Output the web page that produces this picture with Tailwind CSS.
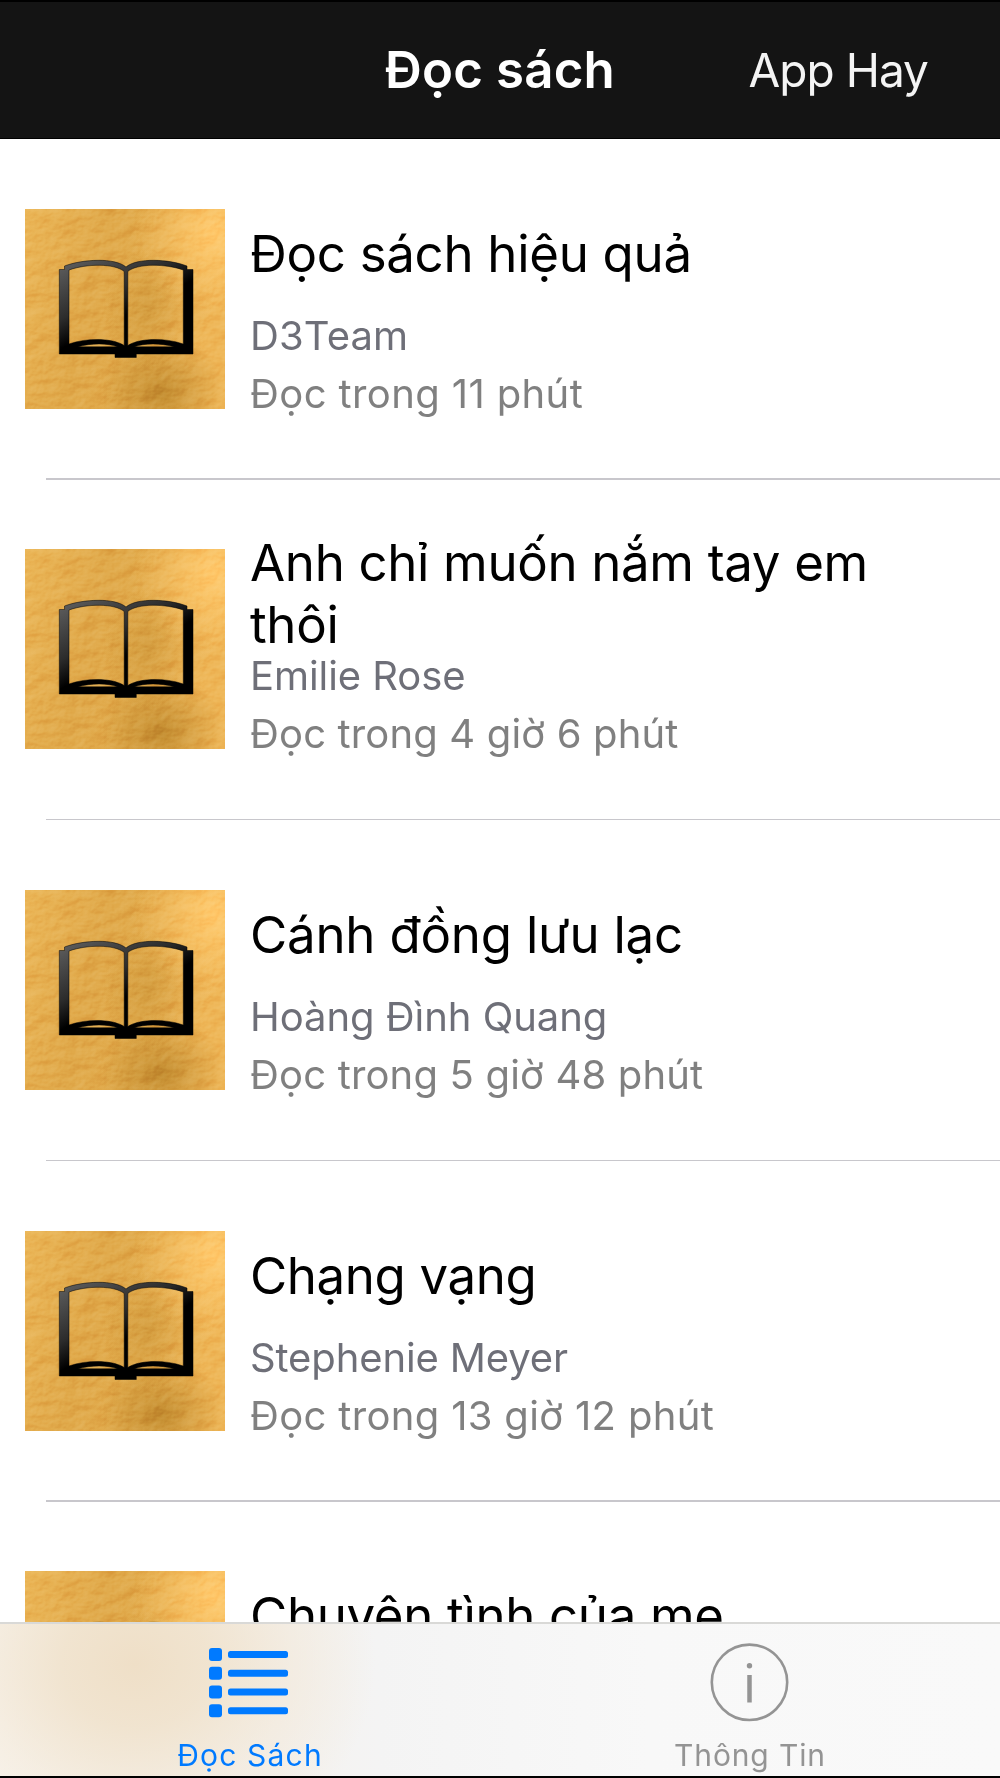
<!DOCTYPE html>
<html lang="vi">
<head>
<meta charset="utf-8">
<title>Đọc sách</title>
<script src="https://cdn.jsdelivr.net/npm/@tailwindcss/browser@4"></script>
</head>
<body class="bg-white">
<svg class="absolute h-0 w-0" aria-hidden="true">
  <defs>
    <linearGradient id="gold" x1="0" y1="0" x2="1" y2="0.25">
      <stop offset="0" stop-color="#ebb657"/>
      <stop offset="0.4" stop-color="#e0a94a"/>
      <stop offset="0.7" stop-color="#e1aa4b"/>
      <stop offset="1" stop-color="#eeb657"/>
    </linearGradient>
    <radialGradient id="shine" cx="0.95" cy="0.12" r="0.42">
      <stop offset="0" stop-color="#ffc96c"/>
      <stop offset="1" stop-color="#ffc96c" stop-opacity="0"/>
    </radialGradient>
    <radialGradient id="shade" cx="0.5" cy="0.5" r="0.5">
      <stop offset="0" stop-color="#b98327" stop-opacity="0.75"/>
      <stop offset="1" stop-color="#b98327" stop-opacity="0"/>
    </radialGradient>
    <linearGradient id="ink" gradientUnits="userSpaceOnUse" x1="40" y1="50" x2="88" y2="142">
      <stop offset="0" stop-color="#606060"/>
      <stop offset="0.5" stop-color="#2c2c2c"/>
      <stop offset="0.75" stop-color="#000"/>
    </linearGradient>
    <filter id="leather" x="0" y="0" width="1" height="1" color-interpolation-filters="sRGB">
      <feTurbulence type="fractalNoise" baseFrequency="0.045 0.055" numOctaves="4" seed="8"/>
      <feColorMatrix values="0 0 0 0 0  0 0 0 0 0  0 0 0 0 0  1 0 0 0 0"/>
      <feDiffuseLighting surfaceScale="4" lighting-color="#fff">
        <feDistantLight azimuth="235" elevation="31"/>
      </feDiffuseLighting>
    </filter>
    <symbol id="cover" viewBox="0 0 200 200">
      <rect width="200" height="200" fill="url(#gold)"/>
      <rect width="200" height="200" fill="url(#shine)"/>
      <ellipse cx="138" cy="185" rx="62" ry="58" fill="url(#shade)" transform="rotate(-20 138 185)"/>
      <ellipse cx="122" cy="100" rx="44" ry="60" fill="url(#shade)" opacity="0.4"/>
      <rect width="200" height="200" filter="url(#leather)" class="mix-blend-soft-light" opacity="0.28"/>
      <path fill="url(#ink)" fill-rule="evenodd" stroke="#000" stroke-opacity="0.55" stroke-width="0.9" d="M34.300 60.500H39.500V57C58 50 90 48.500 101 58C112 48.500 144 50 162 57V60.500H168V145H111.300V148.500H90V145H34.300Z
        M44 61V135C62 128.500 88 129 99.200 136.500V62.500C90 54.500 62 54.500 44 61Z
        M102.800 62.500V136.500C114 129 140 128.500 158.300 135V61C140 54.500 112 54.500 102.800 62.500Z
        M53 137.800C66 134 83 134 92.500 137.800Z M109.500 137.800C119 134 136 134 149 137.800Z"/>
    </symbol>
  </defs>
</svg>

<div class="flex h-[1778px] w-[1000px] flex-col overflow-hidden bg-white font-[Inter,sans-serif]">
  <header class="grid h-[139px] shrink-0 grid-cols-[1fr_auto_1fr] items-baseline border-t-2 border-b border-black bg-[#141414] pt-[37px] text-white">
    <span></span>
    <h1 class="text-[51px] leading-[62px] font-semibold tracking-[0.15px]">Đọc sách</h1>
    <a class="relative -top-px justify-self-end pr-[72px] text-[46px] leading-[56px] tracking-[-0.97px] text-[#f4f4f4]">App Hay</a>
  </header>

  <main id="list" class="min-h-0 flex-1 overflow-hidden"></main>

  <nav class="grid h-[154px] shrink-0 grid-cols-2 border-t-2 border-[#d9d9d7] bg-[radial-gradient(ellipse_240px_210px_at_135px_40px,rgba(239,223,199,1)_0%,rgba(240,226,204,0.9)_30%,rgba(242,230,212,0.5)_65%,rgba(245,238,228,0)_100%),linear-gradient(90deg,#f9f6f1_0%,#f4f2ef_28%,#f4f4f4_38%,#f8f8f8_65%,#f9f9f9_100%)]">
    <a class="flex flex-col items-center text-[#007aff]">
      <svg class="mt-[18px] mr-[2px] h-[80px] w-[80px]" viewBox="0 0 80 80" fill="currentColor">
        <rect x="0" y="6" width="13" height="13" rx="3"/><rect x="19" y="9" width="60" height="7" rx="2.500"/>
        <rect x="0" y="24.700" width="13" height="13" rx="3"/><rect x="19" y="27.700" width="60" height="7" rx="2.500"/>
        <rect x="0" y="43.500" width="13" height="13" rx="3"/><rect x="19" y="46.500" width="60" height="7" rx="2.500"/>
        <rect x="0" y="62.200" width="13" height="13" rx="3"/><rect x="19" y="65.200" width="60" height="7" rx="2.500"/>
      </svg>
      <span class="mt-[15px] text-[30px] leading-9 tracking-[1.18px]">Đọc Sách</span>
    </a>
    <a class="flex flex-col items-center text-[#949494]">
      <svg class="mt-[18px] h-[80px] w-[80px]" viewBox="0 0 80 80" fill="none" stroke="currentColor">
        <circle cx="39.500" cy="40.300" r="37.700" stroke-width="2.600"/>
        <circle cx="39.500" cy="23.700" r="2.700" fill="currentColor" stroke="none"/>
        <path d="M39.500 33V60.500" stroke-width="4.500"/>
      </svg>
      <span class="mt-[15px] text-[30px] leading-9 tracking-[0.88px]">Thông Tin</span>
    </a>
  </nav>
  <div class="h-0.5 shrink-0 bg-black"></div>
</div>

<script>
const books = [
  ["Đọc sách hiệu quả", "D3Team", "Đọc trong 11 phút", -0.3, 0.12, 0.39],
  ["Anh chỉ muốn nắm tay em thôi", "Emilie Rose", "Đọc trong 4 giờ 6 phút", -0.34, -0.07, 0.15],
  ["Cánh đồng lưu lạc", "Hoàng Đình Quang", "Đọc trong 5 giờ 48 phút", -0.22, -0.04, 0.17],
  ["Chạng vạng", "Stephenie Meyer", "Đọc trong 13 giờ 12 phút", -0.4, -0.12, 0.33],
  ["Chuyện tình của mẹ", "", "", -0.34, 0, 0],
];
document.getElementById("list").innerHTML = books.map(([title, author, time, a, b, c]) => `
  <article class="flex h-[340.67px] flex-col">
    <div class="flex min-h-0 flex-1 pl-[25px]">
      <svg class="mt-[69.6px] h-[200px] w-[200px] shrink-0"><use href="#cover"/></svg>
      <div class="ml-[25px] w-[650px] pt-[56.7px]">
        <div class="flex h-[116px] items-center text-[51px] leading-[62px] text-black"><h2 style="letter-spacing:${a}px">${title}</h2></div>
        <p class="text-[40px] leading-[48px] text-[#6e6f78]" style="letter-spacing:${b}px">${author}</p>
        <p class="mt-[10px] text-[40px] leading-[48px] text-[#808080]" style="letter-spacing:${c}px">${time}</p>
      </div>
    </div>
    <div class="ml-[46px] h-[1.33px] shrink-0 bg-[#c8c7cc]"></div>
  </article>`).join("");
</script>
</body>
</html>
